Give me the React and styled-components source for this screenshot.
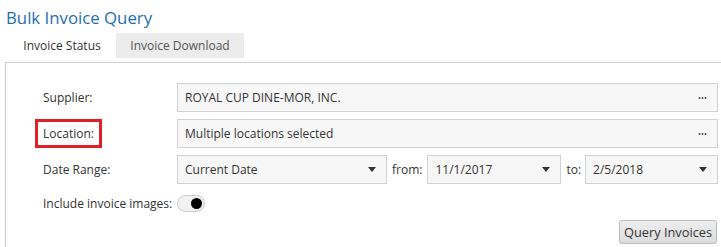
import React from "react";
import styled, { createGlobalStyle } from "styled-components";

const Global = createGlobalStyle`
  html, body { margin: 0; padding: 0; background: #fff; overflow: hidden; }
  body { font-family: "Open Sans", "Liberation Sans", sans-serif; color: #333; }
`;

const Page = styled.div`
  width: 721px;
  height: 247px;
  overflow: hidden;
`;

const Title = styled.h1`
  margin: 0;
  padding: 6px 0 0 6px;
  height: 27px;
  font-size: 16.8px;
  font-weight: 400;
  line-height: 24px;
  color: #1f6db5;
`;

const Tabs = styled.div`
  display: flex;
  padding-left: 8px;
  height: 25px;
`;

const Tab = styled.div`
  width: ${(p) => p.$w}px;
  white-space: nowrap;
  font-size: 12px;
  line-height: 25px;
  text-align: center;
  color: ${(p) => (p.$active ? "#333" : "#555")};
  background: ${(p) => (p.$active ? "#fff" : "#ececec")};
`;

const Panel = styled.div`
  margin: 4px 0 0 5px;
  width: 740px;
  height: 200px;
  box-sizing: border-box;
  border: 1px solid #cfcfcf;
  padding: 20px 0 0 37px;
`;

const Form = styled.div`
  width: 673px;
  display: grid;
  grid-template-columns: 134px 1fr;
  row-gap: 7px;
  align-items: center;
`;

const Label = styled.div`
  font-size: 12px;
  color: #333;
  white-space: nowrap;
  display: flex;
  align-items: center;
`;

const Highlight = styled.span`
  margin-left: -8px;
  padding: 3px 5px 2px 5px;
  border: 3px solid #e41e26;
  line-height: 18px;
`;

const Field = styled.div`
  height: 29px;
  box-sizing: border-box;
  width: ${(p) => (p.$w ? `${p.$w}px` : "100%")};
  border: 1px solid #d2d2d2;
  background: #f7f7f7;
  display: flex;
  align-items: center;
  justify-content: space-between;
  padding: 0 8px 0 7px;
  font-size: 12px;
  color: #333;
  white-space: nowrap;
`;

const Dots = styled.span`
  width: 9px;
  height: 2px;
  margin-right: 2px;
  background: radial-gradient(circle, #555 0.9px, transparent 1.2px) 0 0 / 3px 2px repeat-x;
`;

const Caret = styled.span`
  width: 0;
  height: 0;
  border-left: 4.5px solid transparent;
  border-right: 4.5px solid transparent;
  border-top: 5px solid #333;
  margin-right: 2px;
`;

const DateRow = styled.div`
  display: flex;
  align-items: center;
`;

const Inline = styled.span`
  font-size: 12px;
  color: #333;
  margin: 0 ${(p) => p.$r}px 0 5px;
`;

const ToggleRow = styled.div`
  grid-column: 1 / 3;
  display: flex;
  align-items: center;
  gap: 5px;
  margin-top: 4px;
`;

const Toggle = styled.div`
  width: 28px;
  height: 17px;
  box-sizing: border-box;
  border: 1px solid #c9c9c9;
  border-radius: 9px;
  background: #f1f1f1;
  display: flex;
  align-items: center;
  justify-content: flex-end;
  padding-right: 2px;
  &::after {
    content: "";
    width: 11px;
    height: 11px;
    border-radius: 50%;
    background: #000;
  }
`;

const Actions = styled.div`
  width: 674px;
  display: flex;
  justify-content: flex-end;
  margin-top: 8px;
`;

const Button = styled.button`
  width: 98px;
  height: 24px;
  font-family: inherit;
  font-size: 12.8px;
  color: #333;
  border: 1px solid #b9b9b9;
  border-radius: 3px;
  background: linear-gradient(#eeeeee, #dcdcdc);
  padding: 0;
  white-space: nowrap;
`;

export default function App() {
  return (
    <Page>
      <Global />
      <Title>Bulk Invoice Query</Title>
      <Tabs>
        <Tab $active $w={108}>Invoice Status</Tab>
        <Tab $w={128}>Invoice Download</Tab>
      </Tabs>
      <Panel>
        <Form>
          <Label>Supplier:</Label>
          <Field>
            <span>ROYAL CUP DINE-MOR, INC.</span>
            <Dots />
          </Field>
          <Label>
            <Highlight>Location:</Highlight>
          </Label>
          <Field>
            <span>Multiple locations selected</span>
            <Dots />
          </Field>
          <Label>Date Range:</Label>
          <DateRow>
            <Field $w={210}>
              <span>Current Date</span>
              <Caret />
            </Field>
            <Inline $r={5}>from:</Inline>
            <Field $w={134}>
              <span>11/1/2017</span>
              <Caret />
            </Field>
            <Inline $r={4}>to:</Inline>
            <Field $w={133}>
              <span>2/5/2018</span>
              <Caret />
            </Field>
          </DateRow>
          <ToggleRow>
            <Label>Include invoice images:</Label>
            <Toggle />
          </ToggleRow>
        </Form>
        <Actions>
          <Button>Query Invoices</Button>
        </Actions>
      </Panel>
    </Page>
  );
}
